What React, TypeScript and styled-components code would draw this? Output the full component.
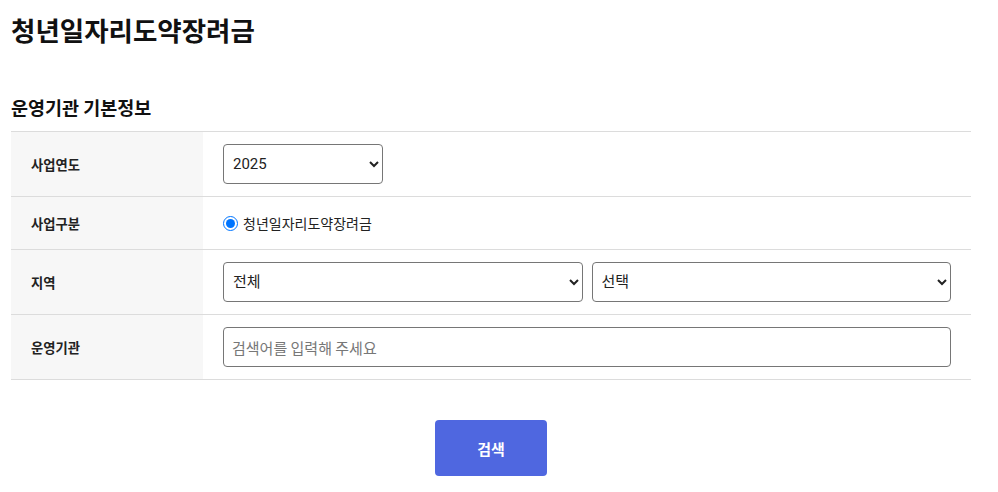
import * as React from "react";
import styled, { createGlobalStyle } from "styled-components";

const GlobalStyle = createGlobalStyle`
  body {
    margin: 0;
    background: #fff;
    font-family: "Noto Sans CJK KR", "Noto Sans", sans-serif;
    color: #222;
  }
  * {
    box-sizing: border-box;
  }
`;

const Page = styled.div`
  padding: 0 27px 0 11px;
`;

const Title = styled.h1`
  margin: 0;
  padding-top: 12px;
  font-size: 26.5px;
  line-height: 36px;
  font-weight: 700;
  color: #111;
`;

const SectionTitle = styled.h2`
  margin: 46px 0 0;
  font-size: 18.5px;
  line-height: 26px;
  font-weight: 700;
  color: #111;
`;

const Table = styled.div`
  margin-top: 11px;
  border-top: 1px solid #dcdcdc;
`;

const Row = styled.div<{ $h: number }>`
  display: grid;
  grid-template-columns: 192px 1fr;
  height: ${(p) => p.$h}px;
  border-bottom: 1px solid #dcdcdc;
`;

const Label = styled.div`
  display: flex;
  align-items: center;
  padding-left: 20px;
  background: #f7f7f7;
  font-size: 13.3px;
  font-weight: 600;
  color: #222;
`;

const Cell = styled.div`
  display: flex;
  align-items: center;
  gap: 9px;
  padding: 0 20px;
`;

const Select = styled.select<{ $w?: string }>`
  width: ${(p) => p.$w || "160px"};
  height: 40px;
  padding: 0 5px;
  border: 1px solid #767676;
  border-radius: 4px;
  background: #fff;
  font-family: "Roboto", "Noto Sans CJK KR", sans-serif;
  font-size: 15px;
  color: #222;
`;

const Grow = styled.div`
  flex: 1;
  display: flex;
`;

const Input = styled.input`
  flex: 1;
  height: 40px;
  padding: 0 8px;
  border: 1px solid #767676;
  border-radius: 4px;
  font-family: "Noto Sans CJK KR", sans-serif;
  font-size: 15px;
  &::placeholder {
    color: #777;
  }
`;

const RadioLabel = styled.label`
  display: flex;
  align-items: center;
  gap: 5px;
  font-size: 14px;
  color: #222;
  input {
    margin: 0;
    width: 15px;
    height: 15px;
  }
`;

const Actions = styled.div`
  display: flex;
  justify-content: center;
  margin-top: 40px;
`;

const Button = styled.button`
  width: 112px;
  height: 56px;
  border: none;
  border-radius: 4px;
  background: #4f67e0;
  color: #fff;
  font-family: "Noto Sans CJK KR", sans-serif;
  font-size: 15px;
  font-weight: 700;
`;

export default function App() {
  return (
    <Page>
      <GlobalStyle />
      <Title>청년일자리도약장려금</Title>
      <SectionTitle>운영기관 기본정보</SectionTitle>
      <Table>
        <Row $h={65}>
          <Label>사업연도</Label>
          <Cell>
            <Select defaultValue="2025">
              <option>2025</option>
              <option>2024</option>
            </Select>
          </Cell>
        </Row>
        <Row $h={53}>
          <Label>사업구분</Label>
          <Cell>
            <RadioLabel>
              <input type="radio" name="biz" defaultChecked />
              청년일자리도약장려금
            </RadioLabel>
          </Cell>
        </Row>
        <Row $h={65}>
          <Label>지역</Label>
          <Cell>
            <Grow>
              <Select $w="100%">
                <option>전체</option>
              </Select>
            </Grow>
            <Grow>
              <Select $w="100%">
                <option>선택</option>
              </Select>
            </Grow>
          </Cell>
        </Row>
        <Row $h={65}>
          <Label>운영기관</Label>
          <Cell>
            <Input placeholder="검색어를 입력해 주세요" />
          </Cell>
        </Row>
      </Table>
      <Actions>
        <Button>검색</Button>
      </Actions>
    </Page>
  );
}
